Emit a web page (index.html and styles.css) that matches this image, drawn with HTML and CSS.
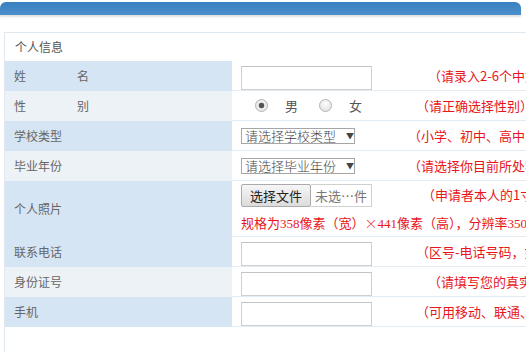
FILE: index.html
```html
<!DOCTYPE html>
<html lang="zh-CN">
<head>
    <meta charset="UTF-8">
    <meta name="viewport" content="width=device-width, initial-scale=1.0">
    <title>个人信息</title>
    <link rel="stylesheet" href="styles.css">
</head>
<body>
    <div class="page">
        <div class="topbar"></div>

        <div class="panel">
            <div class="panel-title">个人信息</div>
            <table class="form-table">
                <tr>
                    <td class="label blue"><span class="spread">姓 名</span></td>
                    <td class="value"><span class="text-input"></span></td>
                    <td class="hint"><span class="indent-d">（请录入2-6个中文字符）</span></td>
                </tr>
                <tr>
                    <td class="label gray"><span class="spread">性 别</span></td>
                    <td class="value">
                        <div class="radios">
                            <span class="radio checked"></span><span class="radio-text">男</span>
                            <span class="radio"></span><span class="radio-text">女</span>
                        </div>
                    </td>
                    <td class="hint"><span class="indent-b">（请正确选择性别）</span></td>
                </tr>
                <tr>
                    <td class="label blue">学校类型</td>
                    <td class="value"><span class="select-box">请选择学校类型<span class="arrow">▼</span></span></td>
                    <td class="hint"><span class="indent-a">（小学、初中、高中、中专）</span></td>
                </tr>
                <tr>
                    <td class="label gray">毕业年份</td>
                    <td class="value"><span class="select-box">请选择毕业年份<span class="arrow">▼</span></span></td>
                    <td class="hint"><span class="indent-a">（请选择你目前所处学段的毕业年份）</span></td>
                </tr>
                <tr class="photo-row">
                    <td class="label blue">个人照片</td>
                    <td class="value photo-cell">
                        <div class="file-line">
                            <span class="file-btn">选择文件</span><span class="file-name">未选…件</span>
                        </div>
                        <div class="photo-note">规格为358像素（宽）<span class="cjk">×</span>441像素（高），分辨率350dpi，文件大小不超过200KB</div>
                    </td>
                    <td class="hint hint-top"><span class="indent-c">（申请者本人的1寸近期免冠照片）</span></td>
                </tr>
                <tr>
                    <td class="label blue">联系电话</td>
                    <td class="value"><span class="text-input"></span></td>
                    <td class="hint"><span class="indent-b">（区号-电话号码，如：010-12345678）</span></td>
                </tr>
                <tr>
                    <td class="label gray">身份证号</td>
                    <td class="value"><span class="text-input"></span></td>
                    <td class="hint"><span class="indent-d">（请填写您的真实身份证号码）</span></td>
                </tr>
                <tr>
                    <td class="label blue">手机</td>
                    <td class="value"><span class="text-input"></span></td>
                    <td class="hint"><span class="indent-b">（可用移动、联通、电信手机号码）</span></td>
                </tr>
            </table>
        </div>
    </div>
</body>
</html>
```

FILE: styles.css
```css
html, body {
    margin: 0;
    padding: 0;
    background-color: #fff;
    overflow: hidden;
}
body {
    font-family: "Noto Sans CJK SC", "Noto Sans", sans-serif;
    font-size: 12px;
    color: #666;
}
.page {
    width: 526px;
    height: 352px;
    overflow: hidden;
}

/* Blue title bar */
.topbar {
    width: 521px;
    height: 13px;
    margin-top: 2px;
    border-radius: 6px 6px 0 0;
    background: linear-gradient(#3a80bf, #4b8fcb);
    box-shadow: 0 2px 2px rgba(0, 0, 0, 0.12);
}

/* Panel */
.panel {
    width: 820px;
    height: 400px;
    margin: 17px 0 0 4px;
    border: 1px solid #dfe7ef;
    border-right: none;
}
.panel-title {
    height: 28px;
    line-height: 28px;
    padding-left: 10px;
    color: #555;
    font-size: 12px;
}

.form-table {
    width: 800px;
    border-collapse: collapse;
    table-layout: fixed;
}
.form-table td {
    padding: 0;
    height: 29px;
    border-bottom: 1px solid #e3ebf3;
    white-space: nowrap;
    vertical-align: middle;
}
.label {
    width: 218px;
    padding-left: 9px !important;
    color: #666;
}
.blue {
    background-color: #d6e5f4;
    border-bottom-color: #d6e5f4 !important;
}
.gray {
    background-color: #edf2f7;
    border-bottom-color: #edf2f7 !important;
}
.spread {
    display: inline-block;
    width: 75px;
    text-align: justify;
    text-align-last: justify;
}
.value {
    width: 168px;
    padding-left: 9px !important;
}
.hint {
    color: #e8161b;
    font-size: 13px;
    overflow: hidden;
}
.hint-top {
    vertical-align: top !important;
    padding-top: 4px !important;
}
.indent-a { margin-left: -1px; }
.indent-b { margin-left: 7px; }
.indent-c { margin-left: 13px; }
.indent-d { margin-left: 19px; }

/* Controls */
.text-input {
    display: block;
    box-sizing: border-box;
    width: 131px;
    height: 24px;
    margin-top: 4px;
    border: 1px solid #cfcfcf;
    border-top-color: #c4c4c4;
    background: #fff;
}
.radios {
    display: flex;
    align-items: center;
    padding-left: 14px;
}
.radio {
    box-sizing: border-box;
    width: 13px;
    height: 13px;
    border: 1px solid #b4b4b4;
    border-radius: 50%;
    background: radial-gradient(circle at 50% 35%, #fdfdfd, #dcdcdc);
}
.radio.checked {
    background: radial-gradient(circle, #555 0, #555 2.5px, #f2f2f2 3.2px, #dcdcdc 100%);
}
.radio-text {
    margin: 0 21px 0 17px;
    font-size: 13px;
    color: #555;
}
.select-box {
    display: inline-flex;
    align-items: center;
    box-sizing: border-box;
    width: 114px;
    height: 16px;
    padding-left: 3px;
    border: 1px solid #a6a6a6;
    font-size: 13px;
    font-weight: 300;
    line-height: 14px;
    color: #444;
}
.arrow {
    margin-left: 10px;
    font-size: 8px;
    color: #444;
}
.photo-cell {
    height: 55px !important;
    vertical-align: top !important;
}
.file-line {
    display: flex;
    margin-top: 3px;
}
.file-btn {
    box-sizing: border-box;
    height: 23px;
    line-height: 21px;
    padding: 0 8px;
    border: 1px solid #aaa;
    border-radius: 2px;
    background: linear-gradient(#f6f6f6, #dcdcdc);
    font-size: 13px;
    color: #222;
}
.file-name {
    box-sizing: border-box;
    height: 23px;
    line-height: 21px;
    padding: 0 4px;
    border: 1px solid #d0d0d0;
    border-left: none;
    font-size: 13px;
    color: #777;
}
.photo-note {
    margin-top: 6px;
    color: #e8161b;
    font-family: "Liberation Serif", "Noto Sans CJK SC", serif;
    font-size: 13px;
}
.cjk {
    font-family: "Noto Sans CJK SC", sans-serif;
    font-weight: 300;
}
```
